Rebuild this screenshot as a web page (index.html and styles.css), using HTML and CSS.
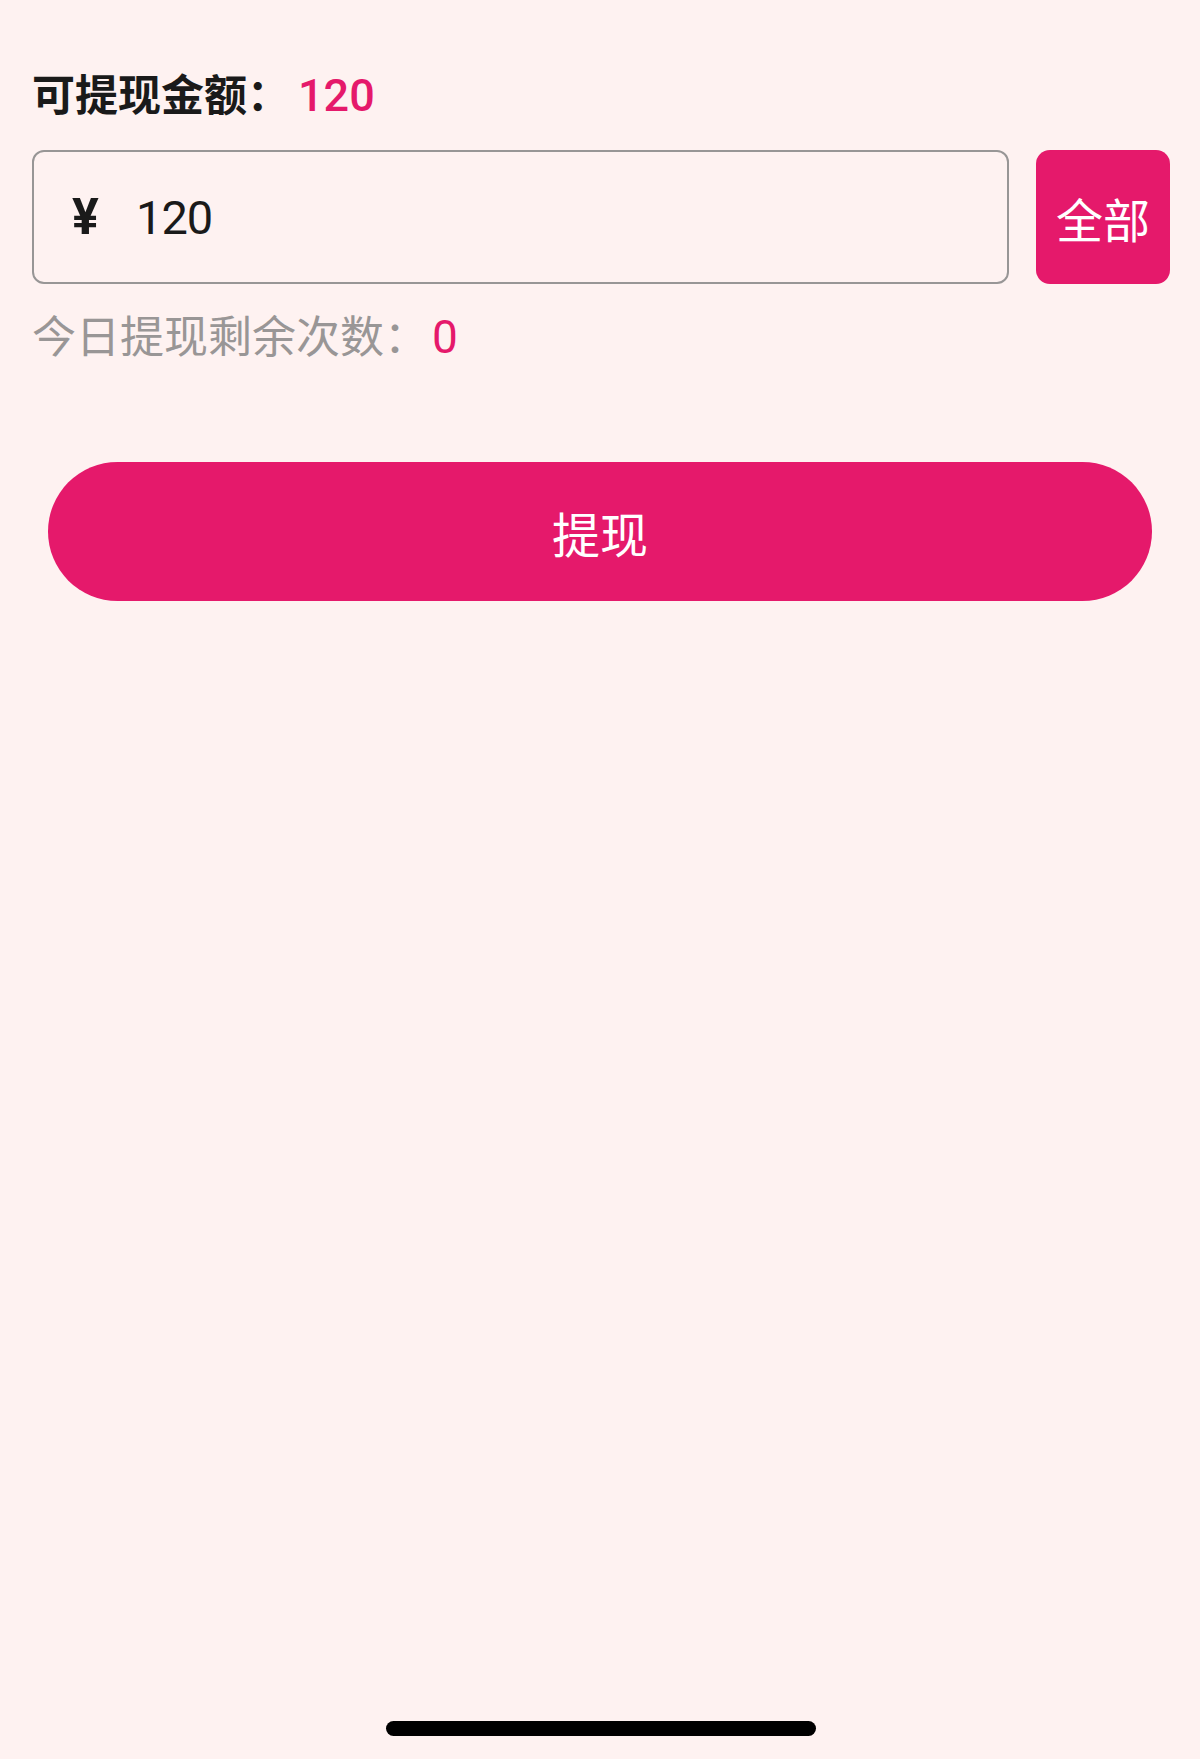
FILE: index.html
```html
<!DOCTYPE html>
<html lang="zh-CN">
<head>
    <meta charset="UTF-8">
    <meta name="viewport" content="width=device-width, initial-scale=1.0">
    <title>提现</title>
    <link rel="stylesheet" href="styles.css">
</head>
<body>
    <div class="page">
        <div class="balance">
            可提现金额：<span class="amount">120</span>
        </div>
        <div class="input-row">
            <div class="money-input">
                <span class="currency">¥</span>
                <input type="text" id="money" value="120">
            </div>
            <button class="all-btn">全部</button>
        </div>
        <div class="times">
            今日提现剩余次数：<span class="times-num">0</span>
        </div>
        <button class="submit-btn">提现</button>
        <div class="home-bar"></div>
    </div>
</body>
</html>
```

FILE: styles.css
```css
body {
    margin: 0;
    background-color: #fef2f1;
    font-family: Roboto, "Noto Sans CJK SC", sans-serif;
    color: #1a1a1a;
}
.page {
    min-height: 100vh;
    display: flex;
    flex-direction: column;
    padding: 0 30px 0 32px;
    box-sizing: border-box;
}
.balance {
    padding-top: 66px;
    font-size: 43px;
    line-height: 60px;
    font-weight: bold;
}
.amount {
    margin-left: 8px;
    color: #e5196b;
    font-weight: 500;
    font-size: 45px;
}
.input-row {
    display: flex;
    gap: 27px;
    margin-top: 24px;
    height: 134px;
}
.money-input {
    flex: 1;
    display: flex;
    align-items: center;
    border: 2px solid #989696;
    border-radius: 12px;
    padding-left: 38px;
}
.currency {
    font-size: 50px;
    font-weight: bold;
    width: 64px;
}
.money-input input {
    flex: 1;
    min-width: 0;
    border: none;
    outline: none;
    background: transparent;
    font-family: Roboto, sans-serif;
    font-size: 47px;
    letter-spacing: -1px;
    color: #1a1a1a;
    padding: 0;
}
.all-btn {
    width: 134px;
    border: none;
    border-radius: 14px;
    background-color: #e5196b;
    color: white;
    font-family: "Noto Sans CJK SC", sans-serif;
    font-size: 47px;
    padding: 0;
}
.times {
    margin-top: 23px;
    font-size: 44px;
    line-height: 60px;
    color: #999696;
}
.times-num {
    margin-left: 4px;
    color: #e5196b;
    font-size: 46px;
}
.submit-btn {
    margin: 94px 18px 0 16px;
    height: 139px;
    border: none;
    border-radius: 70px;
    background-color: #e5196b;
    color: white;
    font-family: "Noto Sans CJK SC", sans-serif;
    font-size: 48px;
}
.home-bar {
    margin: auto auto 23px;
    width: 430px;
    height: 15px;
    border-radius: 8px;
    background-color: #000;
}
```
